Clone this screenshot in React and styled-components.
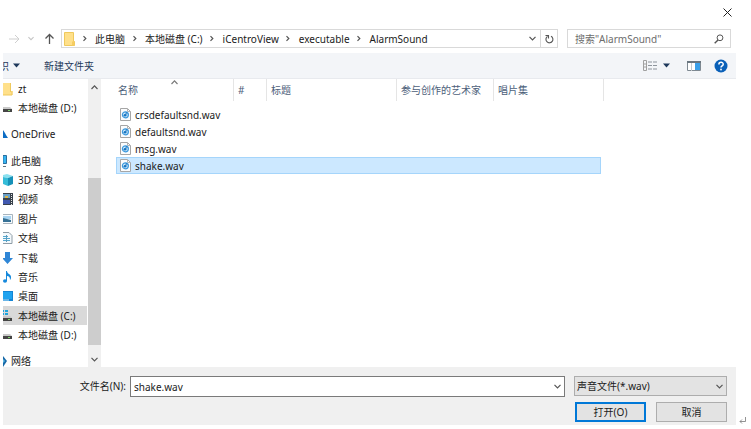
import React from 'react'
import styled, { createGlobalStyle } from 'styled-components'

const GlobalStyle = createGlobalStyle`
  * {
    box-sizing: border-box;
  }

  body {
    margin: 0;
    background-color: #fff;
  }

  body, button, input, select {
    color: #1b1b1b;
    font-family: 'Noto Sans', 'Noto Sans CJK SC', sans-serif;
    font-size: 10px;
    line-height: 14px;
  }
`
const Page = styled.div`
  display: flex;
  height: 100vh;
  min-height: 300px;
  padding: 0 0 4px 3px;
`
const Dialog = styled.main`
  flex: 1;
  display: flex;
  flex-direction: column;
  min-width: 0;
`
const ReturnMark = styled.span`
  align-self: flex-end;
  width: 15px;
  height: 8px;
  padding-left: 3px;
  line-height: 8px;
`
const Icon = styled.svg`
  display: block;
  flex: none;
  fill: none;
  stroke: none;
`
const IconButton = styled.button`
  display: flex;
  align-items: center;
  justify-content: center;
  flex: none;
  width: ${(props) => props.$width || 14}px;
  height: 16px;
  padding: 0;
  border: 0;
  background: none;
`
const TitleBar = styled.header`
  display: flex;
  justify-content: flex-end;
  height: 29px;
  padding: 4px 0 0;
`
const Navigation = styled.nav`
  display: flex;
  align-items: center;
  height: 19px;
  margin-bottom: 5px;
  padding: 0 5px 0 4px;
`
const AddressBar = styled.div`
  flex: 1;
  display: flex;
  align-items: center;
  min-width: 0;
  height: 19px;
  margin-left: 4px;
  padding-left: 2px;
  border: 1px solid #d9d9d9;
`
const Crumb = styled.a`
  color: inherit;
  text-decoration: none;
  white-space: nowrap;
`
const Spacer = styled.div`
  flex: 1;
`
const RefreshButton = styled(IconButton)`
  height: 17px;
  border-left: 1px solid #d9d9d9;
`
const Search = styled.label`
  display: flex;
  align-items: center;
  width: 164px;
  height: 19px;
  margin-left: 9px;
  padding: 0 6px 0 7px;
  border: 1px solid #d9d9d9;
`
const SearchInput = styled.input`
  flex: 1;
  min-width: 0;
  padding: 0;
  border: 0;
  outline: 0;
  background: none;

  &::placeholder {
    color: #6d6d6d;
    opacity: 1;
  }
`
const Toolbar = styled.div`
  display: flex;
  align-items: center;
  height: 26px;
  padding-right: 7px;
  background-color: #f3f5f8;
  border-bottom: 1px solid #e8eaee;
`
const OrganizeButton = styled.button`
  display: flex;
  justify-content: flex-end;
  align-items: center;
  gap: 4px;
  width: 17px;
  padding: 0;
  border: 0;
  background: none;
  color: #1e395b;
  white-space: nowrap;
  overflow: hidden;
`
const ToolbarButton = styled.button`
  margin-left: 24px;
  padding: 0;
  border: 0;
  background: none;
  color: #1e395b;
`
const Body = styled.div`
  flex: 1;
  display: flex;
  min-height: 0;
`
const Sidebar = styled.aside`
  width: 85px;
  overflow: hidden;
`
const Tree = styled.div`
  display: flex;
  flex-direction: column;
  gap: 7px;
  height: calc(100% + 4px);
`
const Group = styled.div`
  flex: ${(props) => props.$count};
  display: flex;
  flex-direction: column;
`
const Place = styled.a`
  flex: 1;
  display: flex;
  align-items: center;
  gap: ${(props) => (props.$root ? 3 : 5)}px;
  margin-right: 1px;
  background-color: ${(props) => (props.$selected ? '#d9d9d9' : 'transparent')};
  color: inherit;
  text-decoration: none;
  white-space: nowrap;
`
const Scrollbar = styled.div`
  display: flex;
  flex-direction: column;
  width: 13px;
  background-color: #f0f0f0;
`
const Track = styled.div`
  flex: ${(props) => props.$size};
  background-color: ${(props) => (props.$thumb ? '#cdcdcd' : 'transparent')};
`
const FileArea = styled.section`
  flex: 1;
  min-width: 0;
  padding-left: 15px;
  overflow: hidden;
`
const FileTable = styled.table`
  width: 488px;
  table-layout: fixed;
  border-collapse: separate;
  border-spacing: 0;
`
const HeaderCell = styled.th`
  height: 22px;
  padding: 0 0 0 ${(props) => (props.$first ? 2 : 4)}px;
  border-right: 1px solid #e5e5e5;
  color: #4c607a;
  font-weight: normal;
  text-align: left;
  white-space: nowrap;
`
const SortLabel = styled.div`
  display: grid;
  grid-template-columns: 53px 1fr;
  align-items: center;
  height: 22px;

  svg {
    align-self: start;
  }
`
const Gap = styled.tbody`
  height: 5px;
`
const FileRow = styled.tr`
  background-color: ${(props) => (props.$selected ? '#cce8ff' : 'transparent')};

  td {
    height: 17px;
    padding: 0;
    border: 0 solid #a5d5fb;
    border-width: ${(props) => (props.$selected ? '1px 0' : 0)};
  }

  td:first-child {
    padding-left: ${(props) => (props.$selected ? 3 : 4)}px;
    border-left-width: ${(props) => (props.$selected ? 1 : 0)}px;
  }

  td:nth-child(5) {
    border-right-width: ${(props) => (props.$selected ? 1 : 0)}px;
  }

  td:last-child {
    border: 0;
    background-color: #fff;
  }
`
const FileName = styled.div`
  display: flex;
  align-items: center;
  gap: 4px;
  height: 15px;
`
const Footer = styled.footer`
  display: flex;
  flex-direction: column;
  gap: 5px;
  height: 58px;
  padding: 9px 9px 0 0;
  background-color: #f0f0f0;
`
const FooterRow = styled.div`
  display: flex;
  justify-content: flex-end;
  gap: ${(props) => props.$gap}px;
`
const FileLabel = styled.label`
  width: 123px;
  padding-top: 3px;
  text-align: right;
  white-space: nowrap;
`
const ComboBox = styled.div`
  flex: 1;
  display: flex;
  align-items: center;
  min-width: 0;
  height: 21px;
  margin-right: 5px;
  padding: 0 3px;
  border: 1px solid #7a7a7a;
  background-color: #fff;
`
const NameInput = styled.input`
  flex: 1;
  min-width: 0;
  padding: 0;
  border: 0;
  outline: 0;
`
const SelectBox = styled.div`
  display: grid;
  align-items: center;
  width: 153px;
  height: 20px;

  > * {
    grid-area: 1 / 1;
  }

  svg {
    justify-self: end;
    margin-right: 4px;
    pointer-events: none;
  }
`
const Select = styled.select`
  width: 100%;
  height: 20px;
  padding: 0 2px;
  border: 1px solid #adadad;
  border-radius: 0;
  background-color: #e3e3e3;
  appearance: none;
`
const Button = styled.button`
  width: 71px;
  height: 20px;
  padding: 0;
  border: ${(props) => (props.$primary ? '2px solid #0078d7' : '1px solid #adadad')};
  background-color: #e3e3e3;
`

function Chevron({ points, width = 7, height = 7, color = '#555' }) {
  return (
    <Icon width={width} height={height} viewBox="0 0 7 7">
      <path d={points} stroke={color} strokeWidth="1.2" />
    </Icon>
  )
}

const Down = (props) => <Chevron points="M0.5 1.8 L3.5 4.9 L6.5 1.8" {...props} />
const Up = (props) => <Chevron points="M0.5 5 L3.5 1.9 L6.5 5" {...props} />

function Separator() {
  return (
    <IconButton $width={20} aria-label="展开">
      <Chevron points="M1.5 1.2 L3.8 3.5 L1.5 5.8" />
    </IconButton>
  )
}

function Triangle() {
  return (
    <Icon width="7" height="5" viewBox="0 0 7 5">
      <path d="M0 0.5h7L3.5 4.5z" fill="#1e395b" />
    </Icon>
  )
}

function FolderIcon() {
  return (
    <Icon width="11" height="14" viewBox="0 0 11 14">
      <path d="M0.5 0.5h9v9h1v4h-10z" fill="#ffe08a" stroke="#efc95c" />
      <path d="M8 9.5h2.5v4H8z" fill="#f6cd62" />
    </Icon>
  )
}

function FileIcon() {
  return (
    <Icon width="11" height="13" viewBox="0 0 11 13">
      <path d="M0.5 0.5h7l3 3v9h-10z" fill="#fbfcfd" stroke="#a6a6a6" />
      <path d="M7.5 0.5v3h3" stroke="#b4b4b4" />
      <circle cx="5.4" cy="6.8" r="3" fill="#d3ecfb" stroke="#3d9ade" strokeWidth="1.2" />
      <circle cx="5" cy="7.3" r="1.3" fill="#1673c0" />
      <path d="M6 7.500V4.500l1.500 1.200" stroke="#1673c0" strokeWidth="0.900" />
    </Icon>
  )
}

// left parts of the icons are scrolled out of the tree, so they start at the edge
const drawings = {
  folder: (
    <>
      <path d="M0 1h8v8h1.5v4H0z" fill="#ffe08a" />
      <path d="M7.5 1v9M9 9v4H0" stroke="#efc95c" />
    </>
  ),
  disk: (
    <>
      <path d="M0 6h7l2 2H0z" fill="#c9c9c9" />
      <path d="M0 8h9v3H0z" fill="#454545" />
      <path d="M5 9.5h2" stroke="#7fd36a" />
    </>
  ),
  system: (
    <>
      <path d="M0 1h1v2H0zM2 1h3v2H2zM0 4h1v2H0zM2 4h3v2H2z" fill="#1fa5dc" />
      <path d="M0 7h7l2 2H0z" fill="#c9c9c9" />
      <path d="M0 9h9v3H0z" fill="#454545" />
      <path d="M5 10.5h2" stroke="#7fd36a" />
    </>
  ),
  cloud: <path d="M0 3l2 3 1 2 2 3H0z" fill="#0b6cc4" />,
  computer: (
    <>
      <path d="M0 1.5h3.5v8H0z" fill="#35b4f2" stroke="#2c6f9e" />
      <path d="M0 12.5h3" stroke="#62727d" />
    </>
  ),
  cube: (
    <>
      <path d="M0 2l4-1 6 2-5 2-5-1z" fill="#8be0ef" />
      <path d="M0 4l5 1v8l-5-2z" fill="#35bcd8" />
      <path d="M5 5l5-2v8l-5 2z" fill="#1691b8" />
    </>
  ),
  video: (
    <>
      <path d="M0 1h10v12H0z" fill="#39424c" />
      <path d="M0 2h7v4H0z" fill="#6aa0c8" />
      <path d="M0 8h7v4H0z" fill="#4159b0" />
      <path d="M2 4h3v2H2z" fill="#d9b445" />
      <path d="M8.5 2v11" stroke="#e4e4e4" strokeDasharray="1 1" />
    </>
  ),
  picture: (
    <>
      <path d="M0 2.5h9.5v9H0" fill="#f6fafd" stroke="#a8b4bd" />
      <path d="M0 4h8v3H0z" fill="#a8d4f2" />
      <path d="M0 6l4 1 4 1v2H0z" fill="#377296" />
    </>
  ),
  document: (
    <>
      <path d="M0 1.5h6l3 3v8H0" fill="#f4f9fc" stroke="#8e9ca6" />
      <path d="M0 5.5h5M0 7.5h7M0 9.5h7" stroke="#55a8cf" />
      <path d="M3.5 4v7" stroke="#5c9cbd" />
    </>
  ),
  download: <path d="M2 1h5v6h3l-5.5 6L0 8V7h2z" fill="#2f86d6" />,
  music: (
    <>
      <path d="M4 1c0 3 4 3 4 6 0 1 0 2-1 3 0-3-1-4-3-4v5H3V1z" fill="#1689dc" />
      <ellipse cx="2" cy="11" rx="2" ry="1.8" fill="#1689dc" />
    </>
  ),
  desktop: (
    <>
      <path d="M0 2h10v10H0z" fill="#1585d4" />
      <path d="M0 3h9v7H0z" fill="#20a3ef" />
      <path d="M0 11h6" stroke="#bfe5fa" />
    </>
  ),
  network: (
    <>
      <path d="M0 2l4 5-4 6z" fill="#1769a8" />
      <path d="M0 5l2 2-2 2z" fill="#65bce4" />
    </>
  ),
}

const groups = [
  [
    { icon: 'folder', label: 'zt' },
    { icon: 'disk', label: '本地磁盘 (D:)' },
  ],
  [{ icon: 'cloud', label: 'OneDrive', root: true }],
  [
    { icon: 'computer', label: '此电脑', root: true },
    { icon: 'cube', label: '3D 对象' },
    { icon: 'video', label: '视频' },
    { icon: 'picture', label: '图片' },
    { icon: 'document', label: '文档' },
    { icon: 'download', label: '下载' },
    { icon: 'music', label: '音乐' },
    { icon: 'desktop', label: '桌面' },
    { icon: 'system', label: '本地磁盘 (C:)', selected: true },
    { icon: 'disk', label: '本地磁盘 (D:)' },
  ],
  [{ icon: 'network', label: '网络', root: true }],
]
const crumbs = ['此电脑', '本地磁盘 (C:)', 'iCentroView', 'executable', 'AlarmSound']
const files = ['crsdefaultsnd.wav', 'defaultsnd.wav', 'msg.wav', 'shake.wav']

function NavigationBar() {
  return (
    <Navigation>
      <IconButton aria-label="前进">
        <Icon width="12" height="10" viewBox="0 0 12 10">
          <path d="M1 5h10M7 1l4 4-4 4" stroke="#cfcfcf" />
        </Icon>
      </IconButton>
      <IconButton $width={20} aria-label="最近浏览的位置">
        <Down width={6} color="#c4c4c4" />
      </IconButton>
      <IconButton $width={16} aria-label="上移">
        <Icon width="11" height="11" viewBox="0 0 11 11">
          <path d="M5.5 11V1.5M1.5 5.5l4-4 4 4" stroke="#555" strokeWidth="1.3" />
        </Icon>
      </IconButton>
      <AddressBar>
        <FolderIcon />
        {crumbs.map((crumb) => (
          <React.Fragment key={crumb}>
            <Separator />
            <Crumb href="#">{crumb}</Crumb>
          </React.Fragment>
        ))}
        <Spacer />
        <IconButton $width={15} aria-label="以前的位置">
          <Down />
        </IconButton>
        <RefreshButton $width={17} aria-label="刷新">
          <Icon width="9" height="10" viewBox="0 0 9 10">
            <path d="M6 2.2A3.5 3.5 0 1 1 2.5 2.4M0.5 1.5h3v3" stroke="#555" strokeWidth="1.1" />
          </Icon>
        </RefreshButton>
      </AddressBar>
      <Search>
        <SearchInput type="text" aria-label="搜索" placeholder={'搜索"AlarmSound"'} />
        <Icon width="10" height="10" viewBox="0 0 10 10">
          <circle cx="6" cy="3.8" r="2.9" stroke="#555" />
          <path d="M4 6L0.7 9.3" stroke="#555" strokeWidth="1.4" />
        </Icon>
      </Search>
    </Navigation>
  )
}

function CommandBar() {
  return (
    <Toolbar>
      <OrganizeButton>
        组织
        <Triangle />
      </OrganizeButton>
      <ToolbarButton>新建文件夹</ToolbarButton>
      <Spacer />
      <IconButton $width={16} aria-label="更改视图">
        <Icon width="14" height="11" viewBox="0 0 14 11">
          <path d="M0.5 0.5h3v10h-3zM0.5 4h3M0.5 7h3" stroke="#a0a0a0" />
          <path d="M5 2h4M5 5.5h4M5 9h4M10 2h4M10 5.5h4M10 9h4" stroke="#8d949c" />
        </Icon>
      </IconButton>
      <IconButton $width={17} aria-label="更多选项">
        <Triangle />
      </IconButton>
      <IconButton $width={38} aria-label="显示预览窗格">
        <Icon width="14" height="10" viewBox="0 0 14 10">
          <path d="M0.5 0.5h13v9h-13z" fill="#fff" stroke="#7e8992" />
          <path d="M0 1h14" stroke="#6a7680" strokeWidth="2" />
          <path d="M4.5 2v8" stroke="#c4c9cd" />
          <path d="M8 2h5v7H8z" fill="#3ba0ea" />
        </Icon>
      </IconButton>
      <IconButton $width={16} aria-label="帮助">
        <Icon width="14" height="14" viewBox="0 0 14 14">
          <circle cx="7" cy="7" r="6.5" fill="#0a60b8" />
          <path d="M4.9 5.4c0-2.8 4.3-2.7 4.3-.2C9.2 6.8 7 6.8 7 8.5" stroke="#fff" strokeWidth="1.5" />
          <circle cx="7" cy="10.5" r="0.9" fill="#fff" />
        </Icon>
      </IconButton>
    </Toolbar>
  )
}

function Places() {
  return (
    <>
      <Sidebar>
        <Tree>
          {groups.map((group, i) => (
            <Group key={i} $count={group.length}>
              {group.map((place) => (
                <Place key={place.label} href="#" $root={place.root} $selected={place.selected}>
                  <Icon
                    width={place.root ? 5 : 10}
                    height="14"
                    viewBox={place.root ? '0 0 5 14' : '0 0 10 14'}
                  >
                    {drawings[place.icon]}
                  </Icon>
                  {place.label}
                </Place>
              ))}
            </Group>
          ))}
        </Tree>
      </Sidebar>
      <Scrollbar>
        <IconButton $width={13} aria-label="向上滚动">
          <Up />
        </IconButton>
        <Track $size={83} />
        <Track $size={167} $thumb />
        <Track $size={6} />
        <IconButton $width={13} aria-label="向下滚动">
          <Down />
        </IconButton>
      </Scrollbar>
    </>
  )
}

function FileList() {
  return (
    <FileArea>
      <FileTable>
        <colgroup>
          <col width="118" />
          <col width="33" />
          <col width="130" />
          <col width="97" />
          <col width="107" />
          <col width="3" />
        </colgroup>
        <thead>
          <tr>
            <HeaderCell $first>
              <SortLabel>
                名称
                <Up color="#7a7a7a" />
              </SortLabel>
            </HeaderCell>
            <HeaderCell>#</HeaderCell>
            <HeaderCell>标题</HeaderCell>
            <HeaderCell>参与创作的艺术家</HeaderCell>
            <HeaderCell colSpan="2">唱片集</HeaderCell>
          </tr>
        </thead>
        <Gap>
          <tr />
        </Gap>
        <tbody>
          {files.map((file) => (
            <FileRow key={file} $selected={file === 'shake.wav'}>
              <td>
                <FileName>
                  <FileIcon />
                  {file}
                </FileName>
              </td>
              <td />
              <td />
              <td />
              <td />
              <td />
            </FileRow>
          ))}
        </tbody>
      </FileTable>
    </FileArea>
  )
}

export default function App() {
  return (
    <Page>
      <GlobalStyle />
      <Dialog>
        <TitleBar>
          <IconButton $width={17} aria-label="关闭">
            <Icon width="9" height="9" viewBox="0 0 9 9">
              <path d="M0.5 0.5l8 8M8.5 0.5l-8 8" stroke="#222" />
            </Icon>
          </IconButton>
        </TitleBar>
        <NavigationBar />
        <CommandBar />
        <Body>
          <Places />
          <FileList />
        </Body>
        <Footer>
          <FooterRow $gap={4}>
            <FileLabel htmlFor="file-name">文件名(N):</FileLabel>
            <ComboBox>
              <NameInput id="file-name" type="text" defaultValue="shake.wav" />
              <Down />
            </ComboBox>
            <SelectBox>
              <Select aria-label="文件类型">
                <option>声音文件(*.wav)</option>
              </Select>
              <Down />
            </SelectBox>
          </FooterRow>
          <FooterRow $gap={10}>
            <Button $primary>打开(O)</Button>
            <Button>取消</Button>
          </FooterRow>
        </Footer>
      </Dialog>
      <ReturnMark>
        <Icon width="7" height="7" viewBox="0 0 7 7">
          <path d="M6.5 0v4.5H1M3 2.5l-2 2 2 2" stroke="#777" strokeWidth="0.8" />
        </Icon>
      </ReturnMark>
    </Page>
  )
}
